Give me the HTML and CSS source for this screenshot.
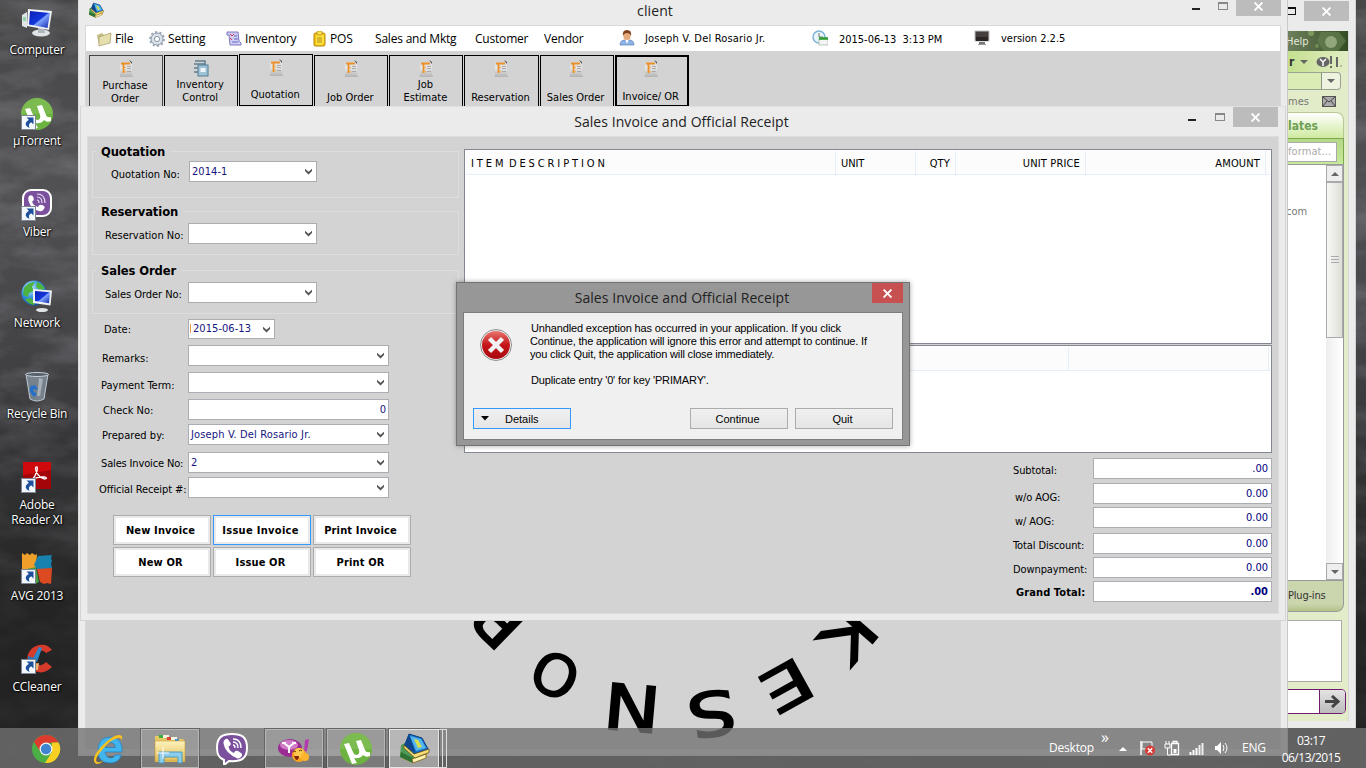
FILE: index.html
```html
<!DOCTYPE html>
<html lang="en">
<head>
<meta charset="utf-8">
<title>client</title>
<link rel="stylesheet" href="styles.css">
</head>
<body>
<svg class="defs" width="0" height="0" aria-hidden="true">
  <defs>
    <linearGradient id="screen" x1="0" y1="0" x2="1" y2="1"><stop offset="0" stop-color="#0a1fb4"/><stop offset=".5" stop-color="#1437dc"/><stop offset=".55" stop-color="#7fa4ff"/><stop offset="1" stop-color="#0b22a8"/></linearGradient>
    <linearGradient id="red" x1="0" y1="0" x2="0" y2="1"><stop offset="0" stop-color="#e8756e"/><stop offset=".5" stop-color="#c4141a"/><stop offset="1" stop-color="#a80a10"/></linearGradient>
    <linearGradient id="page" x1="0" y1="0" x2="0" y2="1"><stop offset="0" stop-color="#d9d9d9"/><stop offset=".4" stop-color="#e6e6e6"/><stop offset="1" stop-color="#b4b4b4"/></linearGradient>
    <radialGradient id="globe" cx=".35" cy=".3" r=".8"><stop offset="0" stop-color="#c9efff"/><stop offset=".5" stop-color="#2f8fe0"/><stop offset="1" stop-color="#0a3f9a"/></radialGradient>
    <linearGradient id="folder" x1="0" y1="0" x2="0" y2="1"><stop offset="0" stop-color="#fdf3bd"/><stop offset="1" stop-color="#e4bd55"/></linearGradient>
    <symbol id="shortcut" viewBox="0 0 15 15"><rect x=".5" y=".5" width="14" height="14" fill="#f4f7fb" stroke="#7c8894"/><path d="M5.500 2.500h7v7l-2.300-2.300Q6.800 9 8.500 13Q1 9.500 7.800 4.800z" fill="#1d4f9c"/></symbol>
    <symbol id="sheet" viewBox="0 0 15 17"><path d="M1 2h12v13l1.500 2H.5L1 15z" fill="url(#page)"/><path d="M10 0l3 4V2z" fill="#444"/><path d="M2 3.500h9M4.500 4v9" stroke="#e9902b" stroke-width="1.800" fill="none"/><path d="M5 7.500h2M5 11.500h2" stroke="#f2b15e" stroke-width="1.500"/><path d="M8 6.500h4M8 8.500h4M8 11.500h4" stroke="#a9a9a9"/></symbol>
    <symbol id="books" viewBox="0 0 32 32"><path d="M2 19l12-5 15 6v4l-15 6L3 25z" fill="#d9a92e"/><path d="M3 12l4-2 9 14-1 6L2 24z" fill="#4f9b56"/><path d="M3 19l12 6v5L2 24z" fill="#2f7238"/><path d="M14 26l14-5v4l-13 5z" fill="#fff2ae" stroke="#7a611b" stroke-width=".8"/><path d="M11 1l13 4 6 11-14 5L7 12z" fill="#1674cc" stroke="#0b3d78"/><path d="M12 3l11 3 5 9-10 3z" fill="#55b5ee"/><path d="M16 6l4 1 4 7-4 1z" fill="#d8df52"/><path d="M6 12l5-11 7 20z" fill="#0e478e"/><path d="M16 21l15-5v3.500L17 25 6 15v-3z" fill="#f6dc78" stroke="#62501b" stroke-width=".8"/></symbol>
    <symbol id="chev" viewBox="0 0 9 7"><path d="M1 .8v2.200L4.500 6.500 8 3V.8L4.500 3.700z" fill="#555"/></symbol>
    <symbol id="viber" viewBox="0 0 32 32"><path d="M16 1C6 1 1 4 1 15c0 7 2 10 7 12v5l5-4c13 1 18-3 18-13C31 4 26 1 16 1z" fill="#7b519d" stroke="#fff" stroke-width="2"/><path d="M9 6.500q2-1.500 3.500.5l2 3q1 2-2 3.500 1 5 5.500 6.500 1-3 4-2l3 2q2 1.500.5 3.500-2 2.500-4 2Q9 20 7.500 10.500 7 8 9 6.500z" fill="#fff"/><path d="M17 6q8 0 8 9M17 9q5 0 5 6M17 12q2 0 2 3" stroke="#fff" stroke-width="1.400" fill="none"/></symbol>
    <symbol id="ut" viewBox="0 0 32 32"><circle cx="16" cy="16" r="16" fill="#6db33f"/><path d="M0 16a16 16 0 0 1 32 0z" fill="#8bc565" opacity=".45"/><path d="M4 11l5-1 4 9q1 3 4 3 3-1 2-5l-3-9 5-1 4 10q1 3 5 2v4q-4 2-7-1-3 4-9 3l3 5-5 1z" fill="#fff"/></symbol>
    <symbol id="x" viewBox="0 0 8 8"><path d="M.5.5l7 7M7.500.5l-7 7" stroke="#fff" stroke-width="1.700"/></symbol>
  </defs>
</svg>

<div class="desktop">
  <svg class="texture" width="1366" height="768" aria-hidden="true">
    <filter id="grain"><feTurbulence type="fractalNoise" baseFrequency=".018 .04" numOctaves="5" seed="8"/><feColorMatrix values="0 0 0 0 .6  0 0 0 0 .6  0 0 0 0 .66  1.600 0 0 0 -.6"/></filter>
    <rect width="1366" height="768" filter="url(#grain)"/>
  </svg>

  <div class="shortcuts">
    <div class="sc"><svg width="32" height="32" viewBox="0 0 32 32"><path d="M1 8l5-3v16l-5-2z" fill="#dfe4e6"/><path d="M2 11h3M2 13h3" stroke="#4bc46a"/><ellipse cx="20" cy="26" rx="9" ry="3.500" fill="#dfe3e6"/><path d="M17 20h6l1 6h-7z" fill="#aeb6bc"/><path d="M7 2l24 2-3 19L6 19z" fill="#f1f3f5"/><path d="M9 4l20 2-2.500 15L8 17.500z" fill="url(#screen)"/></svg><span>Computer</span></div>
    <div class="sc"><svg width="32" height="32"><use href="#ut" width="32" height="32"/><use href="#shortcut" y="17" width="15" height="15"/></svg><span>µTorrent</span></div>
    <div class="sc"><svg width="32" height="32" viewBox="0 0 32 32"><rect x="2" y="1" width="28" height="26" rx="8" fill="#7b519d" stroke="#fff" stroke-width="2"/><path d="M8 7q3-2 4.500 1.500 1 3-1.500 4 1 4 6 5.500 1-3 4-2 4 1 2 4-2 3-5 2-8-2-10.500-10Q6.500 9 8 7z" fill="#fff"/><path d="M16 5q8 0 8 9M16 8q5 0 5 6M16 11q2 0 2 3" stroke="#e9def2" stroke-width="1.200" fill="none"/><use href="#shortcut" y="17" width="15" height="15"/></svg><span>Viber</span></div>
    <div class="sc"><svg width="32" height="32" viewBox="0 0 32 32"><circle cx="13" cy="13" r="12.500" fill="url(#globe)"/><path d="M3 8q4-6 11-6l-3 5 2 4-5 2-1 4-5-2zM16 2q6 2 8 7l-5 1-4-3zM4 19l6-1 4 5-1 2q-6-1-9-6z" fill="#4eb33e"/><ellipse cx="21" cy="30" rx="6" ry="2" fill="#dfe3e6"/><path d="M12 9l19 1.500-1.500 15L12 23z" fill="#eef1f4"/><path d="M14 11l15 1.300-1 11L14 21z" fill="url(#screen)"/></svg><span>Network</span></div>
    <div class="sc"><svg width="32" height="32" viewBox="0 0 32 32"><path d="M5 3h22l-4 25q-7 4-14 0z" fill="#8795a3" fill-opacity=".75" stroke="#bcc8d2"/><ellipse cx="16" cy="3.500" rx="11.500" ry="2" fill="#56616c" stroke="#c5d0da"/><path d="M18 7l4 1-3 17h-3z" fill="#e4ebf0" opacity=".45"/><path d="M9 21q-1-4 2-7l3 2-2 4 4 3-3 3zM13 13l4 5-3 1" fill="#2370cd"/></svg><span>Recycle Bin</span></div>
    <div class="sc"><svg width="32" height="32" viewBox="0 0 32 32"><rect x="2" y="0" width="28" height="27" fill="#cf0a0c"/><path d="M2 13l28-5v19H2z" fill="#a30508"/><path d="M15 5q2-1 1 4-2 6-5 9 6-4 13-3 3 1 0 2-6-1-9-8-1-3 0-4z" fill="none" stroke="#fff" stroke-width="1.300"/><use href="#shortcut" y="16" width="15" height="15"/></svg><span>Adobe<br>Reader XI</span></div>
    <div class="sc"><svg width="32" height="32" viewBox="0 0 32 32"><path d="M1 0l3 2 2-2 3 2 2-2 3 2 2-1-1 15H1z" fill="#efa02a"/><path d="M17 3l14-1-1 3 1 3-1 3 1 4-14 2-4-5z" fill="#1682ad"/><path d="M16 16l15-1-1 16-4-1-3 1-4-2z" fill="#dc4a22"/><path d="M1 17l14-3 3 15-4 2H1z" fill="#469e42"/><use href="#shortcut" y="16" width="15" height="15"/></svg><span>AVG 2013</span></div>
    <div class="sc"><svg width="32" height="32" viewBox="0 0 32 32"><path d="M31 6Q25-2 15 2C5 6 3 20 12 26q10 6 19-3l-6-5q-4 5-9 2-5-7 1-12 5-3 8 1z" fill="#d63a2a"/><path d="M18 3l3 1-5 14-5-2z" fill="#2b86c9"/><path d="M7 12l9 3-2 5-7-2z" fill="#2c6fb4"/><path d="M12 20l6-1-1 7h-4z" fill="#e8b370"/><use href="#shortcut" y="15" width="15" height="15"/></svg><span>CCleaner</span></div>
  </div>

  <!-- messenger window behind the client -->
  <section class="messenger">
    <div class="m-title"><i class="restore"></i><b class="close"><svg width="9" height="9"><use href="#x"/></svg></b></div>
    <div class="m-body">
      <div class="m-menu"><svg width="60" height="20"><circle cx="23" cy="2" r="3" fill="#7d9a5d"/><circle cx="29" cy="15" r="2" fill="#6f8d52"/><path d="M33 1h18l7 9-8 10H36l-7-10z" fill="#6b8355" opacity=".6"/><circle cx="43" cy="11" r="6" fill="#91a77b"/></svg><span>Help</span></div>
      <div class="m-user"><b>r</b><i class="tri"></i><svg width="27" height="15"><ellipse cx="7" cy="8" rx="6.500" ry="5" fill="#666"/><path d="M4 5l3 3 3-3M7 8v4" stroke="#fff" stroke-width="1.500" fill="none"/><path d="M15 2v8M15 12v2M21 3v10" stroke="#666" stroke-width="2"/><path d="M25 11v2" stroke="#888"/></svg></div>
      <div class="m-search"><i class="tri"></i></div>
      <div class="m-games"><span>mes</span><svg width="14" height="11"><rect x=".5" y=".5" width="13" height="10" fill="#aaa" stroke="#555"/><path d="M1 1l6 5 6-5M1 10l4-5M13 10L9 5" stroke="#444" fill="none"/></svg></div>
      <div class="m-tab">lates</div>
      <div class="m-find"><span>format...</span></div>
      <div class="m-list"><span>com</span>
        <div class="m-scroll"><b><i class="tri up"></i></b><em><svg width="8" height="9"><path d="M0 .5h8M0 3.500h8M0 6.500h8" stroke="#aaa"/></svg></em><u></u><b><i class="tri"></i></b></div>
      </div>
      <div class="m-plug">Plug-ins</div>
      <div class="m-ad"></div>
      <div class="m-go"><b><svg width="15" height="13"><path d="M0 6.500h12M7 1l6 5.500L7 12" stroke="#444" stroke-width="3" fill="none"/></svg></b></div>
    </div>
  </section>

  <!-- main client window -->
  <section class="client">
    <header class="c-title"><svg width="16" height="17"><use href="#books"/></svg><h1>client</h1>
      <div class="winbtns"><i class="min"></i><i class="max"></i><b class="close"><svg width="9" height="9"><use href="#x"/></svg></b></div>
    </header>
    <div class="c-body">
      <nav class="menu">
        <span class="mi file"><svg width="16" height="16"><path d="M1 4l5-2 2 2 7-2-1 10-11 3z" fill="#c5bd85"/><path d="M3 6l12-4-1 10-11 3z" fill="#e6dfae" stroke="#a79f68" stroke-width=".7"/></svg>File</span>
        <span class="mi setting"><svg width="16" height="16"><circle cx="8" cy="8" r="6" fill="#dce2ea" stroke="#8a96a6" stroke-width="1"/><circle cx="8" cy="8" r="7" fill="none" stroke="#9aa5b3" stroke-width="1.800" stroke-dasharray="2.200 2.200"/><circle cx="8" cy="8" r="2.600" fill="#fff" stroke="#8a96a6"/></svg>Setting</span>
        <span class="mi inv"><svg width="16" height="16"><path d="M1 1h11l1 9 2 2v2H4L3 4H1z" fill="#cfcdf2" stroke="#7d79bf"/><path d="M4 3l2 2 2-2M4 7l2 2" stroke="#d23b58" fill="none"/><path d="M8 5h3M8 8h4M6 11h6" stroke="#5c6ac6"/></svg>Inventory</span>
        <span class="mi pos"><svg width="14" height="16"><rect x="1" y="2" width="11" height="13" rx="1.500" fill="#f2c016" stroke="#b58504"/><path d="M3 4h8v8l-2 2H3z" fill="#ffe23e"/><rect x="4" y="0" width="5" height="4" rx="1" fill="#ffe04e" stroke="#a87f12" stroke-width=".7"/><path d="M4 7h5M4 9h5M4 11h5" stroke="#b08a1c"/></svg>POS</span>
        <span class="mi sm">Sales and Mktg</span><span class="mi cu">Customer</span><span class="mi ve">Vendor</span>
        <span class="st user"><svg width="16" height="16"><path d="M1 15q0-5 5-5h4q5 0 5 5z" fill="#8db2e6" stroke="#5a7fb8" stroke-width=".7"/><path d="M6 9h4l-2 5z" fill="#fff"/><rect x="4.500" y="1.500" width="7" height="8.500" rx="3.200" fill="#e5ab7c"/><path d="M4 6Q3 0 8 0t4 6q-1-3-4-3T4 6z" fill="#7e431b"/></svg>Joseph V. Del Rosario Jr.</span>
        <span class="st time"><svg width="16" height="16"><circle cx="7" cy="7" r="6" fill="#e9f4fb" stroke="#7eb2d4" stroke-width="1.500"/><path d="M7 3v4h4" stroke="#777" fill="none"/><rect x="7" y="8" width="9" height="7" fill="#f5f5f5" stroke="#a5b3a5" stroke-width=".7"/><path d="M7 8.500h9" stroke="#2f9e35" stroke-width="2.600"/></svg><span>2015-06-13&nbsp; 3:13 PM</span></span>
        <span class="st ver"><svg width="16" height="16"><rect x="1" y="1" width="14" height="10" fill="#463d3d" stroke="#c0c0c0"/><rect x="2" y="7" width="12" height="4" fill="#2a2424"/><path d="M5 12h6v2H5z" fill="#777"/><path d="M4 14.500h8" stroke="#999"/></svg>version 2.2.5</span>
      </nav>
      <div class="tools">
        <button class="tool soft"><svg width="15" height="17"><use href="#sheet"/></svg><span>Purchase<br>Order</span></button>
        <button class="tool two"><svg width="17" height="17"><path d="M2 1h10v3M1 4h11v3M1 8h4M1 12h4" stroke="#5f7d90" fill="none" stroke-width="1.500"/><rect x="5" y="5" width="10" height="11" fill="#9fc3d6" stroke="#557d94"/><rect x="7.500" y="8" width="5" height="4" fill="#eef6fa"/></svg><span>Inventory<br>Control</span></button>
        <button class="tool quo"><svg width="15" height="17"><use href="#sheet"/></svg><span>Quotation</span></button>
        <button class="tool"><svg width="15" height="17"><use href="#sheet"/></svg><span>Job Order</span></button>
        <button class="tool two"><svg width="15" height="17"><use href="#sheet"/></svg><span>Job<br>Estimate</span></button>
        <button class="tool"><svg width="15" height="17"><use href="#sheet"/></svg><span>Reservation</span></button>
        <button class="tool"><svg width="15" height="17"><use href="#sheet"/></svg><span>Sales Order</span></button>
        <button class="tool act"><svg width="15" height="17"><use href="#sheet"/></svg><span>Invoice/ OR</span></button>
      </div>
      <svg class="ring" width="460" height="128" viewBox="460 620 460 128">
        <g text-anchor="middle">
          <text transform="translate(497 620) rotate(224) scale(1.150 1)" y="23">R</text>
          <text transform="translate(555 675) rotate(207) scale(.92 .9)" y="23">O</text>
          <text transform="translate(632 708) rotate(185) scale(1.200 1)" y="23">N</text>
          <text transform="translate(712 714) rotate(171) scale(1.200 .96)" y="23">S</text>
          <text transform="translate(787 686) rotate(151) scale(1.250 .92)" y="23">E</text>
          <text transform="translate(849 635) rotate(131) scale(1.150 1)" y="23">K</text>
        </g>
      </svg>
    </div>
  </section>

  <!-- invoice form -->
  <section class="invoice">
    <header class="i-title"><h2>Sales Invoice and Official Receipt</h2>
      <div class="winbtns"><i class="min"></i><i class="max"></i><b class="close"><svg width="9" height="9"><use href="#x"/></svg></b></div>
    </header>
    <div class="i-body">
      <div class="form">
        <div class="group g1"><h3>Quotation</h3><div class="row"><label>Quotation No:</label><div class="field"><span>2014-1</span><svg width="9" height="7"><use href="#chev"/></svg></div></div></div>
        <div class="group g2"><h3>Reservation</h3><div class="row"><label>Reservation No:</label><div class="field"><span></span><svg width="9" height="7"><use href="#chev"/></svg></div></div></div>
        <div class="group g3"><h3>Sales Order</h3><div class="row"><label>Sales Order No:</label><div class="field"><span></span><svg width="9" height="7"><use href="#chev"/></svg></div></div></div>
        <div class="rows">
          <div class="row date"><label>Date:</label><div class="field"><span>2015-06-13</span><svg width="9" height="7"><use href="#chev"/></svg></div></div>
          <div class="row rem"><label>Remarks:</label><div class="field"><span></span><svg width="9" height="7"><use href="#chev"/></svg></div></div>
          <div class="row pay"><label>Payment Term:</label><div class="field"><span></span><svg width="9" height="7"><use href="#chev"/></svg></div></div>
          <div class="row chk"><label>Check No:</label><div class="field num"><span>0</span></div></div>
          <div class="row prep"><label>Prepared by:</label><div class="field"><span>Joseph V. Del Rosario Jr.</span><svg width="9" height="7"><use href="#chev"/></svg></div></div>
          <div class="row sin"><label>Sales Invoice No:</label><div class="field"><span>2</span><svg width="9" height="7"><use href="#chev"/></svg></div></div>
          <div class="row orn"><label>Official Receipt #:</label><div class="field"><span></span><svg width="9" height="7"><use href="#chev"/></svg></div></div>
        </div>
        <div class="actions">
          <button>New Invoice</button><button class="focus">Issue Invoice</button><button>Print Invoice</button>
          <button>New OR</button><button>Issue OR</button><button>Print OR</button>
        </div>
      </div>
      <div class="right">
        <div class="list items"><div class="head"><span class="desc">ITEM DESCRIPTION</span><span>UNIT</span><span class="r">QTY</span><span class="r">UNIT PRICE</span><span class="r">AMOUNT</span></div></div>
        <div class="list extra"><div class="head"><span></span><span></span></div></div>
        <div class="totals">
          <div><label>Subtotal:</label><output>.00</output></div>
          <div class="in"><label>w/o AOG:</label><output>0.00</output></div>
          <div class="in"><label>w/ AOG:</label><output>0.00</output></div>
          <div class="gap"><label>Total Discount:</label><output>0.00</output></div>
          <div><label>Downpayment:</label><output>0.00</output></div>
          <div class="grand"><label>Grand Total:</label><output>.00</output></div>
        </div>
      </div>
    </div>
  </section>

  <!-- exception dialog -->
  <section class="dialog">
    <header><h2>Sales Invoice and Official Receipt</h2><b class="close"><svg width="9" height="9"><use href="#x"/></svg></b></header>
    <div class="d-body">
      <div class="d-main">
        <svg width="32" height="32"><circle cx="16" cy="16" r="15.500" fill="#f2f2f2" stroke="#8c8c8c"/><circle cx="16" cy="16" r="14" fill="url(#red)"/><path d="M9.500 9.500l13 13M22.500 9.500l-13 13" stroke="#f1f1f1" stroke-width="4.500"/></svg>
        <p>Unhandled exception has occurred in your application. If you click<br><span class="l2">Continue, the application will ignore this error and attempt to continue. If</span><br><span class="l3">you click Quit, the application will close immediately.</span><br><br>Duplicate entry '0' for key 'PRIMARY'.</p>
      </div>
      <div class="d-btns"><button class="details"><svg width="8" height="5"><path d="M0 0h8L4 4.500z"/></svg>Details</button><button>Continue</button><button>Quit</button></div>
    </div>
  </section>

  <footer class="taskbar">
    <div class="tasks">
      <span class="task w1"><svg width="30" height="30" viewBox="0 0 30 30"><circle cx="15" cy="15" r="14" fill="#4caf45"/><path d="M3 8a14 14 0 0 1 24.500 0.500L15 9l-6 8z" fill="#dd3b2d"/><path d="M27.500 8.500A14 14 0 0 1 14 29l7-11V8.500z" fill="#fbd022"/><circle cx="15" cy="15" r="6.500" fill="#f4f4f4"/><circle cx="15" cy="15" r="5.200" fill="#3f84cf"/></svg></span>
      <span class="task w2"><svg width="32" height="32" viewBox="0 0 32 32"><path d="M30 19H13q1 6 6 6 3 0 4-3h6.500q-3 8-11 8Q6 30 6 18 6 4 18.500 4 31 5 30 19zM13 14.500h10.500q-1-5-5-5T13 14.500z" fill="#43b5ee" stroke="#1c7fc4" stroke-width=".7"/><path d="M3 30Q-1 25 9 14 21 1 28 2q4 1 1 6 1-4-3-3-7 1-16 12-8 9-5 12 3 1 7-2-6 6-9 3z" fill="#f7c21f"/></svg></span>
      <span class="task btn w3"><svg width="32" height="32" viewBox="0 0 32 32"><path d="M1 3h9l2 3h17l2 3v20H1z" fill="#e8c765"/><path d="M5 2h4v3H5z" fill="#3cad3c"/><path d="M9 2h6v3H9zM17 4h6v3h-6z" fill="#f8f4dc"/><path d="M13 4h4v3h-4z" fill="#db4432"/><path d="M21 6h4v3h-4z" fill="#3c93d8"/><path d="M1 8h30v20H1z" fill="url(#folder)" stroke="#c89a37" stroke-width=".6"/><path d="M5 30V19h23v11h-4v-6H10v6z" fill="#8ecdea" stroke="#4a9cc4"/><path d="M9 14v12M3 20h12" stroke="#fff"/></svg></span>
      <span class="task w4"><svg width="32" height="32"><use href="#viber"/></svg></span>
      <span class="task btn w5"><svg width="32" height="32" viewBox="0 0 32 32"><ellipse cx="12" cy="15" rx="12" ry="9" fill="#9b2b93"/><ellipse cx="11" cy="12" rx="9" ry="5" fill="#cf7bc8"/><path d="M6 10l5 4 5-4M11 14v6M4 10h4M14 10h4" stroke="#fff" stroke-width="2" fill="none"/><path d="M27 7l4-1-2 12-3 1z" fill="#b53cae"/><circle cx="28" cy="22" r="2" fill="#b53cae"/><circle cx="21" cy="22" r="7" fill="#f9a51a"/><circle cx="21" cy="20" r="5" fill="#fdc84b"/><circle cx="27" cy="24" r="4" fill="#fbb42c"/><path d="M15 19q2-2 3 0M21 18q2-2 3 0" stroke="#5a3000" fill="none"/><path d="M16 23l5 0q0 4-3 4z" fill="#7e2410"/></svg></span>
      <span class="task btn w6"><svg width="32" height="32"><use href="#ut"/></svg></span>
      <span class="task btn w7"><svg width="32" height="32"><use href="#books"/></svg></span><i class="stack"></i><i class="stack"></i>
    </div>
    <div class="tray">
      <span class="desk">Desktop</span><span class="more">»</span>
      <svg class="t-up" width="8" height="5"><path d="M0 5l4-4 4 4z" fill="#fff"/></svg>
      <svg class="t-flag" width="17" height="16"><path d="M2 1v14" stroke="#fff" stroke-width="1.500"/><path d="M3 2h10v7H3z" fill="#888" stroke="#fff"/><circle cx="11" cy="10.500" r="5" fill="#d63b36"/><path d="M8.800 8.300l4.400 4.400M13.200 8.300l-4.400 4.400" stroke="#fff" stroke-width="1.400"/></svg>
      <svg class="t-plug" width="16" height="16"><path d="M7.500 3.500h7v11h-7zM9 3V1.500h4V3" fill="none" stroke="#fff" stroke-width="1.300"/><path d="M1 4h5v4H1zM2 1v3M5 1v3M3.500 8v7H7" stroke="#fff" fill="none"/><path d="M9.500 9h3v4h-3z" fill="#fff"/></svg>
      <svg class="t-sig" width="15" height="13"><path d="M1.500 13v-3M4.500 13V8M7.500 13V6" stroke="#fff" stroke-width="2"/><path d="M10.500 13V3M13.500 13V1" stroke="#eee" stroke-width="2"/></svg>
      <svg class="t-vol" width="14" height="14"><path d="M1 5h2l4-4v12L3 9H1z" fill="#fff"/><path d="M9 4q2 3 0 6M11 2q4 5 0 10" stroke="#fff" fill="none"/></svg>
      <span class="eng">ENG</span>
      <span class="clock">03:17<br>06/13/2015</span>
    </div>
  </footer>
</div>
</body>
</html>
```
FILE: styles.css
```css
* { box-sizing: border-box; }
body { margin: 0; overflow: hidden; }
h1, h2, h3, p { margin: 0; font-weight: 400; }
button { font: inherit; color: inherit; margin: 0; padding: 0; }
svg { display: block; flex: none; }
.defs { position: absolute; }

.desktop {
  position: relative; width: 1366px; height: 768px; overflow: hidden;
  background: linear-gradient(#464647 0, #515154 25%, #434346 45%, #343436 60%, #242424 78%, #222 100%);
  font-family: "DejaVu Sans Condensed", "DejaVu Sans", sans-serif; font-stretch: condensed; font-size: 11px; color: #000;
}
.texture { position: absolute; left: 0; top: 0; opacity: .28; -webkit-mask-image: linear-gradient(#000 50%, rgba(0, 0, 0, .25) 85%); mask-image: linear-gradient(#000 50%, rgba(0, 0, 0, .25) 85%); }

/* desktop shortcuts */
.shortcuts { position: absolute; left: 0; top: 7px; width: 74px; display: flex; flex-direction: column; }
.sc { height: 91px; display: flex; flex-direction: column; align-items: center; gap: 3px;
  font: 12px/15px "Open Sans", "Noto Sans", sans-serif; letter-spacing: -.2px; color: #fff; text-align: center; text-shadow: 1px 1px 2px #000, 0 0 2px #000; }
.sc span { white-space: nowrap; }

/* window furniture */
.winbtns { display: flex; align-items: flex-start; }
.min { width: 8px; height: 2px; background: #222; }
.max { width: 10px; height: 8px; border: 1px solid #888; border-top-width: 2px; }
.close { display: flex; align-items: center; justify-content: center; background: #bcbcbc; }

/* messenger */
.messenger { position: absolute; left: 1270px; top: 0; width: 86px; height: 728px; background: #ebebeb; border-right: 1px solid #d2d2d2; padding: 1px 6px 7px 0; }
.m-title { height: 30px; display: flex; align-items: flex-start; }
.restore { width: 10px; height: 8px; margin: 6px 8px 0 16px; border: 1px solid #111; border-top-width: 2px; }
.m-title .close { width: 45px; height: 20px; }
.m-body { width: 79px; height: 690px; padding-left: 18px; background: #e3ecc9; border-right: 1px solid #d8d8d8; display: flex; flex-direction: column; color: #777; }
.m-menu { height: 20px; background: linear-gradient(90deg, #6d7f5c, #344d24); display: flex; overflow: hidden; }
.m-menu span { margin: 4px 0 0 -62px; color: #e3e8dc; font-size: 11px; line-height: 13px; }
.m-user { height: 21px; background: linear-gradient(90deg, #c5e08f, #e2edc5); display: flex; align-items: center; color: #333; font-size: 12px; }
.m-user .tri { margin: 0 8px 0 6px; }
.m-user b { margin-left: 1px; }
.tri { border: 4px solid transparent; border-top-color: #666; border-bottom: 0; width: 0; height: 0; }
.tri.up { border-bottom: 4px solid #666; border-top: 0; }
.m-search { width: 53px; height: 18px; border: 1px solid #9aa392; border-left: 0; border-radius: 0 4px 4px 0; background: linear-gradient(90deg, #d9edb4 33px, #8e9587 33px 34px, #edf3de 34px); display: flex; align-items: center; justify-content: flex-end; padding-right: 5px; }
.m-games { height: 22px; display: flex; justify-content: space-between; align-items: center; padding-right: 12px; }
.m-tab { width: 56px; height: 26px; border: 1px solid #b8c894; border-width: 1px 1px 0 0; border-radius: 0 8px 0 0; background: linear-gradient(#fff, #cfeaa0); color: #6d9f55; font: bold 12px/27px "DejaVu Sans Condensed", "DejaVu Sans", sans-serif; font-stretch: condensed; }
.m-find { width: 56px; height: 26px; background: linear-gradient(#b4d988, #c6e99a); border: 1px solid #7ea74d; border-width: 1px 1px 0 0; padding-top: 3px; }
.m-find span { display: block; width: 49px; height: 20px; background: #fff; border: 1px solid #aaa; border-left: 0; color: #aaa; line-height: 18px; font-size: 11px; letter-spacing: .1px; }
.m-list { width: 56px; height: 417px; background: #fff; border: 1px solid #999; border-left: 0; display: flex; justify-content: space-between; }
.m-list > span { margin: 40px 0 0 -2px; }
.m-scroll { width: 17px; height: 415px; background: linear-gradient(90deg, #eee, #fff); display: flex; flex-direction: column; }
.m-scroll b { height: 17px; border: 1px solid #aaa; background: #eee; display: flex; align-items: center; justify-content: center; }
.m-scroll em { height: 156px; border: 1px solid #aaa; background: linear-gradient(90deg, #f7f7f4, #deded9); display: flex; align-items: center; justify-content: center; }
.m-scroll u { flex: 1; }
.m-plug { width: 56px; height: 31px; background: linear-gradient(#cbd6ae 75%, #b4c489); border: 1px solid #999; border-width: 0 1px 1px 0; border-radius: 0 0 8px 0; color: #333; line-height: 30px; letter-spacing: -.2px; }
.m-ad { width: 54px; height: 62px; margin-top: 8px; background: #fff; border: 1px solid #aaa; border-left: 0; }
.m-go { width: 58px; height: 25px; margin-top: 7px; background: #fff; border: 1px solid #701b70; border-left: 0; border-radius: 0 5px 5px 0; display: flex; justify-content: flex-end; overflow: hidden; }
.m-go b { width: 26px; border-left: 1px solid #701b70; background: linear-gradient(#e4e4e4, #bbb); display: flex; align-items: center; justify-content: center; }

/* client */
.client { position: absolute; left: 78px; top: -1px; width: 1210px; height: 757px; background: #ebebeb; border: 1px solid #dcdcdc; border-right-color: #c8c8c8; padding: 0 6px 7px; }
.c-title { height: 25px; display: flex; align-items: flex-start; }
.c-title svg { margin: 2px 0 0 3px; }
.c-title h1 { flex: 1; text-align: center; font: 14px/22px "Open Sans", sans-serif; letter-spacing: .1px; color: #222; padding-left: 7px; margin-right: -7px; }
.c-title .winbtns { width: 89px; }
.c-title .min { margin: 8px 18px 0 0; }
.c-title .max { margin: 2px 8px 0 0; }
.c-title .close { width: 45px; height: 16px; }
.c-title .close svg { margin: -3px 0 0; }
.c-body { height: 724px; border: 1px solid #d8d8d8; border-bottom: 0; background: #d3d3d3; display: flex; flex-direction: column; }
.menu { height: 25px; flex: none; background: #fff; display: flex; align-items: center; font: 12px/16px "Open Sans", "Noto Sans", sans-serif; letter-spacing: -.2px; padding-left: 10px; white-space: nowrap; }
.mi { display: flex; align-items: center; gap: 3px; }
.file { width: 53px; } .setting { width: 77px; } .inv { width: 87px; } .pos { width: 62px; } .sm { width: 100px; } .cu { width: 69px; } .ve { width: 75px; }
.st { display: flex; align-items: center; font: 11px/14px "DejaVu Sans Condensed", "DejaVu Sans", sans-serif; font-stretch: condensed; letter-spacing: -.02px; gap: 10px; padding-top: 1px; }
.user { width: 193px; letter-spacing: .18px; } .time { width: 162px; gap: 11px; } .time span { padding-top: 1px; } .ver { gap: 11px; }
.time svg, .ver svg, .user svg { margin-top: -2px; }
.tools { display: flex; flex: none; gap: 1px; padding: 4px 0 0 3px; align-items: flex-start; }
.tool { width: 74.100px; height: 53px; border: 1px solid #000; background: transparent; display: flex; flex-direction: column; align-items: center; justify-content: space-between; padding: 4px 0 3px; line-height: 13px; font-size: 11px; }
.tool span { margin-left: -2px; }
.tool.soft { border-color: #444; padding-bottom: 2px; }
.tool.two { padding-bottom: 3px; }
.tool.quo { height: 52px; margin-top: -1px; padding: 4px 0; }
.tool.act { height: 51px; border-width: 2px; border-bottom-width: 1px; padding: 3px 0 2px; }
.ring { margin: 512px 0 0 374px; }
.ring text { font: 400 63px "DejaVu Sans", sans-serif; stroke: #000; stroke-width: 2px; }

/* invoice window */
.invoice { position: absolute; left: 80px; top: 106px; width: 1206px; height: 515px; background: #ebebeb; border: 1px solid #d4d4d4; border-top-color: #e0e0e0; padding: 0 6px 7px; }
.i-title { height: 29px; display: flex; }
.i-title h2 { flex: 1; text-align: center; font: 14px/29px "Open Sans", sans-serif; letter-spacing: .06px; color: #222; padding-left: 88px; }
.i-title .min { margin: 12px 19px 0 0; }
.i-title .max { margin: 6px 8px 0 0; }
.i-title .close { width: 45px; height: 20px; margin-right: 1px; }
.i-body { height: 478px; border: 1px solid #dcdcdc; background: #d3d3d3; display: flex; padding: 12px 5px 0 4px; }
.form { width: 372px; }
.group { width: 367px; border: 1px solid #ddd; position: relative; }
.group h3 { position: absolute; left: 3px; top: -7px; padding: 0 5px; background: #d3d3d3; font-weight: 700; line-height: 14px; letter-spacing: -.1px; }
.g1 { height: 47px; margin-top: 2px; padding: 9px 0 0 96px; }
.g2 { height: 44px; margin-top: 13px; padding: 11px 0 0 95px; }
.g3 { height: 44px; margin-top: 15px; padding: 11px 0 0 95px; }
.row { display: flex; height: 21px; white-space: nowrap; }
.row label { line-height: 14px; padding-top: 7px; }
.group .row label { width: 90px; margin-left: -90px; }
.g1 .row label { padding-left: 12px; }
.g2 .row label { padding-left: 7px; padding-top: 6px; }
.g3 .row label { padding-left: 7px; padding-top: 6px; letter-spacing: -.05px; }
.field { height: 21px; background: #fff; border: 1px solid #abadb3; color: #15157f; display: flex; justify-content: space-between; align-items: center; padding: 0 3px 0 2px; }
.field span { line-height: 14px; letter-spacing: .05px; }
.group .field { width: 129px; }
.g1 .field { width: 128px; }
.rows .row label { width: 96px; }
.rows .field { width: 201px; }
.date { margin-top: 5px; }
.date.row { height: 20px; }
.date label { padding: 4px 0 0 12px; }
.rows .date .field { width: 87px; height: 20px; padding-left: 1px; }
.date .field span { border-left: 1px solid #e4a057; padding-left: 2px; line-height: 9px; height: 9px; margin-top: -2px; }
.rem { margin-top: 6px; } .rem label { padding-left: 10px; }
.pay { margin-top: 6px; } .pay label { padding-left: 9px; }
.chk { margin-top: 6px; } .chk label { padding: 5px 0 0 11px; }
.prep { margin-top: 4px; } .prep label { padding: 5px 0 0 10px; letter-spacing: .05px; }
.prep .field span { letter-spacing: .15px; }
.sin { margin-top: 7px; } .sin label { padding: 5px 0 0 9px; letter-spacing: -.15px; }
.orn { margin-top: 4px; } .orn label { padding: 6px 0 0 7px; letter-spacing: -.1px; }
.num { justify-content: flex-end; padding-right: 2px; }
.actions { display: grid; grid-template-columns: repeat(3, 98px); grid-auto-rows: 30px; gap: 2px; margin: 17px 0 0 21px; }
.actions button { border: 1px solid #acacac; background: #fff; box-shadow: inset 0 0 0 2px #e9e9e9; font-weight: 700; font-size: 11px; letter-spacing: .15px; padding-right: 3px; }
.actions .focus { border-color: #3399ff; letter-spacing: .3px; }
.right { width: 808px; }
.list { background: #fff; border: 1px solid #828790; padding: 1px 1px 0; }
.items { height: 195px; }
.extra { height: 108px; margin-top: 1px; }
.head { display: grid; grid-template-columns: 370px 80px 40px 130px 180px; height: 24px; background: #fcfcfc; border-bottom: 1px solid #e6eefa; line-height: 25px; }
.head span { border-right: 1px solid #e6eefa; padding: 0 5px; letter-spacing: -.1px; }
.head .desc { letter-spacing: 2.900px; word-spacing: -3.500px; }
.head .r { text-align: right; letter-spacing: .15px; }
.extra .head { grid-template-columns: 603px 200px; }
.totals { display: flex; flex-direction: column; gap: 3px; width: 259px; margin: 5px 0 0 549px; }
.totals > div { display: flex; height: 21px; }
.totals label { width: 80px; line-height: 14px; padding-top: 6px; white-space: nowrap; letter-spacing: -.1px; }
.totals > div:first-child { margin-bottom: 1px; }
.totals .in label { padding-left: 2px; padding-top: 8px; }
.totals .gap { margin-top: 2px; }
.totals output { width: 179px; background: #fff; border: 1px solid #abadb3; text-align: right; color: #000080; line-height: 20px; padding-right: 3px; }
.grand { font-weight: 700; }
.totals .grand label { padding-left: 3px; padding-top: 5px; letter-spacing: .1px; }

/* exception dialog */
.dialog { position: absolute; left: 456px; top: 282px; width: 454px; height: 164px; background: #979797; border: 1px solid #737373; padding: 0 6px 6px; box-shadow: 0 0 5px rgba(0, 0, 0, .35); font-family: "Liberation Sans", Arial, sans-serif; letter-spacing: -.15px; }
.dialog header { height: 29px; display: flex; }
.dialog h2 { flex: 1; text-align: center; font: 14px/30px "Open Sans", sans-serif; letter-spacing: .06px; color: #222; padding-left: 29px; }
.dialog .close { width: 31px; height: 20px; background: #c75050; }
.d-body { height: 128px; background: #f0f0f0; border: 1px solid #7d7d7d; }
.d-main { display: flex; height: 95px; padding: 9px 0 0 16px; }
.d-main svg { margin-top: 7px; }
.d-main p { margin-left: 19px; line-height: 13px; white-space: nowrap; letter-spacing: -.14px; }
.l2, .l3 { margin-left: -1px; letter-spacing: -.17px; }
.d-btns { display: flex; gap: 7px; padding-left: 9px; }
.d-btns button { width: 98px; height: 21px; border: 1px solid #acacac; background: linear-gradient(#f0f0f0, #e5e5e5); padding-right: 3px; }
.d-btns .details { border-color: #3399ff; margin-right: 112px; display: flex; align-items: center; padding-left: 7px; gap: 16px; }

/* taskbar */
.taskbar { position: absolute; left: 0; top: 728px; width: 1366px; height: 40px; background: rgba(114, 114, 114, .79); display: flex; justify-content: space-between; color: #fff; font: 12px/16px "Open Sans", "Noto Sans", sans-serif; }
.tasks { display: flex; padding: 1px 0 0 17px; }
.task { width: 58px; height: 39px; margin-right: 4px; display: flex; align-items: center; justify-content: center; }
.btn { border: 1px solid #b5b5b5; background: rgba(255, 255, 255, .16); box-shadow: 0 0 0 1px rgba(70, 70, 70, .5); }
.w7 { width: 50px; margin-right: 0; border-color: #e6e6e6; background: rgba(255, 255, 255, .4); }
.stack { width: 4px; height: 39px; border: 1px solid #ddd; border-left: 0; }
.tray { display: flex; width: 320px; align-items: center; letter-spacing: -.2px; }
.desk { width: 52px; margin-left: 3px; }
.more { width: 20px; margin-top: -23px; font-size: 16px; }
.t-up { margin-right: 13px; margin-left: -2px; }
.t-flag { margin-right: 8px; margin-left: -1px; }
.t-plug { margin-right: 9px; }
.t-sig { margin-right: 10px; }
.t-vol { margin-right: 14px; }
.eng { width: 28px; }
.clock { width: 82px; text-align: center; line-height: 17px; padding-top: 2px; letter-spacing: -.5px; }
```
